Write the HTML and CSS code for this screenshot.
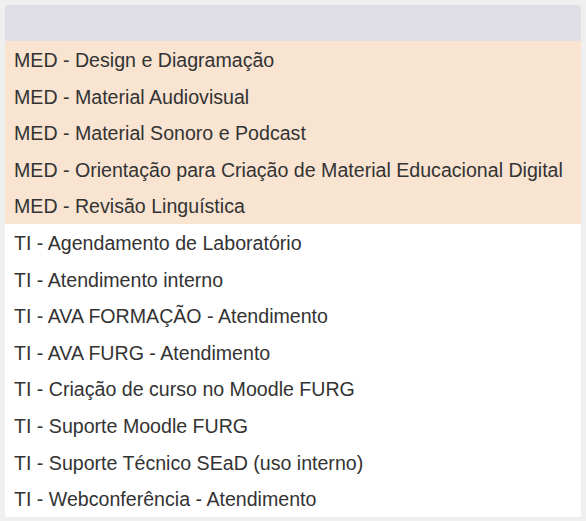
FILE: index.html
```html
<!DOCTYPE html>
<html lang="pt-BR">
<head>
    <meta charset="UTF-8">
    <title>Serviços</title>
    <link rel="stylesheet" href="styles.css">
</head>
<body>
    <div class="list-box">
        <div class="list-header"></div>
        <ul class="options">
            <li class="option group-med">MED - Design e Diagramação</li>
            <li class="option group-med">MED - Material Audiovisual</li>
            <li class="option group-med">MED - Material Sonoro e Podcast</li>
            <li class="option group-med">MED - Orientação para Criação de Material Educacional Digital</li>
            <li class="option group-med">MED - Revisão Linguística</li>
            <li class="option">TI - Agendamento de Laboratório</li>
            <li class="option">TI - Atendimento interno</li>
            <li class="option">TI - AVA FORMAÇÃO - Atendimento</li>
            <li class="option">TI - AVA FURG - Atendimento</li>
            <li class="option">TI - Criação de curso no Moodle FURG</li>
            <li class="option">TI - Suporte Moodle FURG</li>
            <li class="option">TI - Suporte Técnico SEaD (uso interno)</li>
            <li class="option">TI - Webconferência - Atendimento</li>
        </ul>
    </div>
</body>
</html>
```

FILE: styles.css
```css
* {
    margin: 0;
    padding: 0;
    box-sizing: border-box;
}

body {
    background: #efefef;
    font-family: "Liberation Sans", Arial, sans-serif;
    padding: 5px;
    height: 100vh;
}

.list-box {
    width: 576px;
    background: #fff;
    border-radius: 2px;
}

.list-header {
    height: 36px;
    background: #e0dfe5;
    border-radius: 2px 2px 0 0;
}

.options {
    list-style: none;
}

.option {
    height: 36.6px;
    line-height: 38px;
    padding-left: 9px;
    font-size: 19.6px;
    color: #333;
    white-space: nowrap;
}

.group-med {
    background: #f8e4d1;
}
```
